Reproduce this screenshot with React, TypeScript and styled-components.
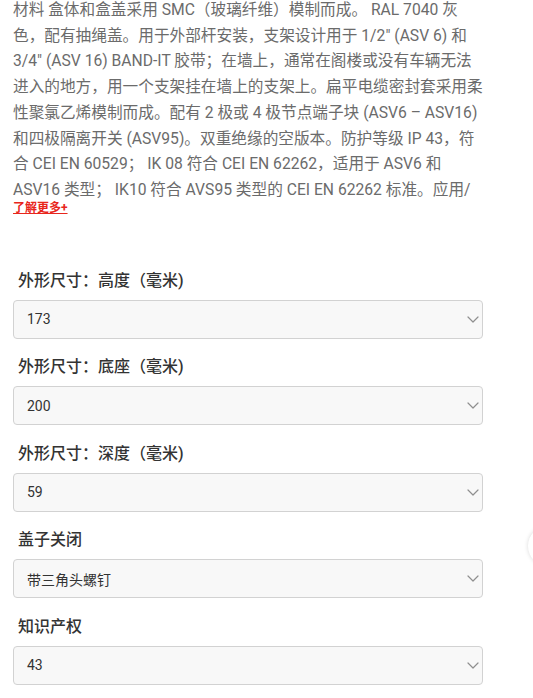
import React from "react";
import styled, { createGlobalStyle } from "styled-components";

const Global = createGlobalStyle`
  html, body { margin: 0; padding: 0; background: #fff; overflow: hidden; }
  body { font-family: Roboto, "Noto Sans CJK SC", sans-serif; }
`;

const Page = styled.div`
  position: relative;
  width: 533px;
  height: 698px;
  overflow: hidden;
  padding: 0 50px 0 13px;
  box-sizing: border-box;
`;

const Description = styled.p`
  margin: -3px 0 0 0;
  font-size: 15.67px;
  line-height: 25.7px;
  color: #6b6b6b;
  width: 472px;
`;

const MoreLink = styled.a`
  display: block;
  margin-top: -2px;
  font-size: 12px;
  line-height: 14px;
  font-weight: 700;
  color: #e8261c;
  text-decoration: underline;
  cursor: pointer;
`;

const Fields = styled.div`
  display: flex;
  flex-direction: column;
  margin-top: 55px;
  width: 470px;
`;

const Field = styled.div`
  display: flex;
  flex-direction: column;
  gap: 8px;
  margin-bottom: 17.5px;
`;

const Label = styled.div`
  padding-left: 5px;
  font-size: 16px;
  line-height: 22px;
  font-weight: 500;
  color: #333;
`;

const Select = styled.div`
  display: flex;
  align-items: center;
  justify-content: space-between;
  height: 39px;
  box-sizing: border-box;
  border: 1px solid #d2d2d2;
  border-radius: 4px;
  background: #f8f8f8;
  padding: 0 3px 0 13px;
  font-size: 14px;
  color: #333;
`;

const Floater = styled.div`
  position: absolute;
  left: 528px;
  top: 526px;
  width: 40px;
  height: 40px;
  border-radius: 50%;
  background: #fff;
  box-shadow: 0 0 4px rgba(0, 0, 0, 0.15);
`;

const Chevron = () => (
  <svg width="12" height="7" viewBox="0 0 12 7" fill="none">
    <path d="M1 1l5 5 5-5" stroke="#8f8f8f" strokeWidth="1.2" strokeLinecap="round" strokeLinejoin="round" />
  </svg>
);

const fields = [
  { label: "外形尺寸：高度（毫米)", value: "173" },
  { label: "外形尺寸：底座（毫米)", value: "200" },
  { label: "外形尺寸：深度（毫米)", value: "59" },
  { label: "盖子关闭", value: "带三角头螺钉" },
  { label: "知识产权", value: "43" },
];

export default function App() {
  return (
    <Page>
      <Global />
      <Description>
        材料 盒体和盒盖采用 SMC（玻璃纤维）模制而成。 RAL 7040 灰色，配有抽绳盖。用于外部杆安装，支架设计用于 1/2" (ASV 6) 和 3/4" (ASV 16) BAND-IT 胶带；在墙上，通常在阁楼或没有车辆无法进入的地方，用一个支架挂在墙上的支架上。扁平电缆密封套采用柔性聚氯乙烯模制而成。配有 2 极或 4 极节点端子块 (ASV6 – ASV16) 和四极隔离开关 (ASV95)。双重绝缘的空版本。防护等级 IP 43，符合 CEI EN 60529； IK 08 符合 CEI EN 62262，适用于 ASV6 和 ASV16 类型； IK10 符合 AVS95 类型的 CEI EN 62262 标准。应用/
      </Description>
      <MoreLink>了解更多+</MoreLink>
      <Fields>
        {fields.map((f) => (
          <Field key={f.label}>
            <Label>{f.label}</Label>
            <Select>
              <span>{f.value}</span>
              <Chevron />
            </Select>
          </Field>
        ))}
      </Fields>
      <Floater />
    </Page>
  );
}
